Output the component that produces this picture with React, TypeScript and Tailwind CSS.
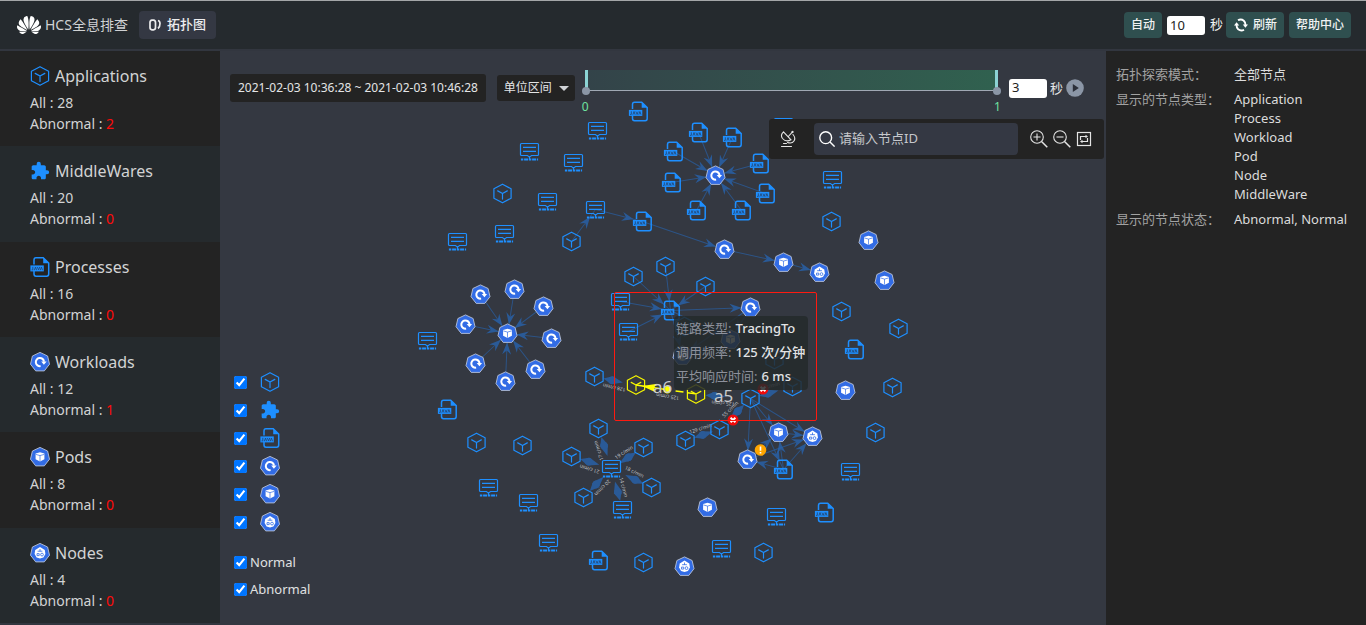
import React from 'react';
import { SiHuawei } from 'react-icons/si';
import { MdExtension } from 'react-icons/md';

type Point = [number, number];

const BLUE = '#1e8fff';

function CubeShape({ color = BLUE }: { color?: string }) {
  return (
    <g fill="none" stroke={color} strokeWidth="1.2" strokeLinejoin="round">
      <path d="M0 -9.3 L8.6 -4.7 V4.7 L0 9.3 L-8.6 4.7 V-4.7 Z" />
      <path d="M-4.8 -2.6 L0 0 L4.8 -2.6 M0 0 V5.6" strokeLinecap="round" />
    </g>
  );
}

function QueueShape() {
  return (
    <g fill="none" stroke={BLUE} strokeWidth="1.2">
      <path d="M-8 -8 H8 Q9 -8 9 -7 V3 Q9 4 8 4 H2 L0 5.6 L-2 4 H-8 Q-9 4 -9 3 V-7 Q-9 -8 -8 -8 Z" />
      <path d="M-6.5 -4.2 H6.5 M-6.5 -0.2 H6.5 M0 5 V8" />
      <path d="M-8.6 8 H8.6" strokeWidth="1.8" strokeDasharray="2.4 0.8 4 0.8" />
    </g>
  );
}

function JavaShape() {
  return (
    <g>
      <path
        d="M-6 -2.5 V-7 Q-6 -9.2 -4 -9.2 H3.2 L8.7 -4 V7 Q8.7 9.2 6.700 9.2 H-4 Q-6 9.2 -6 7 V4"
        fill="none"
        stroke={BLUE}
        strokeWidth="1.5"
      />
      <path d="M3.2 -9.6 L9.2 -3.8 H3.2 Z" fill={BLUE} />
      <rect x="-9.6" y="-1.6" width="13.4" height="6" fill={BLUE} />
      <path
        d="M-7.2 -0.2 V2.900 H-8.4 M-5.6 3.2 L-4.5 0 L-3.4 3.2 M-2.6 0 L-1.4 3 L-0.3 0 M0.3 3.2 L1.4 0 L2.5 3.2"
        fill="none"
        stroke="#244a78"
        strokeWidth="0.9"
      />
    </g>
  );
}

function Heptagon({ children }: { children: React.ReactNode }) {
  return (
    <g>
      <path
        d="M0 -9.6 L7.6 -6 L9.5 2.2 L4.3 8.9 H-4.3 L-9.5 2.2 L-7.6 -6 Z"
        fill="#326ce5"
        stroke="#b9c3d8"
        strokeWidth="0.9"
        strokeLinejoin="round"
      />
      {children}
    </g>
  );
}

function WorkloadShape() {
  return (
    <Heptagon>
      <path d="M0.6 4.1 A4.1 4.1 0 1 1 4 -0.3" fill="none" stroke="#fff" strokeWidth="2" />
      <path d="M1.2 -0.6 H6.6 L3.9 2.8 Z" fill="#fff" />
    </Heptagon>
  );
}

function PodShape() {
  return (
    <Heptagon>
      <path d="M0 -4.8 L4.4 -3.4 V2.2 L0 4.4 L-4.4 2.2 V-3.4 Z" fill="#fff" />
      <path d="M-4.2 -2.6 L0 -1.400 L4.2 -2.6 M0 -1.400 V4.2" fill="none" stroke="#326ce5" strokeWidth="0.7" />
    </Heptagon>
  );
}

function NodeShape() {
  return (
    <Heptagon>
      <path d="M0 -6 L2 -4.8 L4.8 -3 L5.4 1 L3.4 4.4 L0 5.6 L-3.4 4.4 L-5.4 1 L-4.8 -3 L-2 -4.8 Z" fill="#fff" />
      <g fill="none" stroke="#326ce5" strokeWidth="0.8">
        <path d="M0 -4 V-1.6 M-2.4 -1.8 H2.4 M-3 0.600 H-0.8 V2.600 H-3 Z" />
        <circle cx="2" cy="1.6" r="1.4" />
      </g>
    </Heptagon>
  );
}

function PuzzleShape() {
  return <MdExtension x={-10} y={-10} size={20} color={BLUE} />;
}

const shapes = {
  app: CubeShape,
  middleware: PuzzleShape,
  queue: QueueShape,
  process: JavaShape,
  workload: WorkloadShape,
  pod: PodShape,
  node: NodeShape,
};
type Kind = keyof typeof shapes;

function KindIcon({ kind }: { kind: Kind }) {
  const Shape = shapes[kind];
  return (
    <svg viewBox="-10 -10 20 20" className="size-5 shrink-0" aria-hidden="true">
      <Shape />
    </svg>
  );
}

const nodes: Partial<Record<Kind, Point[]>> = {
  queue: [
    [597, 130], [529, 151], [573, 162], [547, 201], [595, 209], [504, 233], [457, 241], [620, 301], [628, 331],
    [427, 340], [488, 487], [528, 502], [611, 468], [622, 509], [548, 542], [832, 179], [850, 471], [776, 516],
    [721, 548], [783, 126],
  ],
  app: [
    [502, 193], [571, 241], [633, 276], [665, 266], [705, 286], [594, 376], [750, 398], [792, 386], [774, 359],
    [684, 326], [719, 429], [685, 440], [598, 428], [571, 456], [643, 447], [651, 487], [583, 497], [476, 442],
    [522, 445], [643, 562], [763, 552], [831, 221], [841, 311], [898, 328], [892, 387], [875, 432],
  ],
  process: [
    [638, 111], [698, 132], [732, 137], [673, 151], [671, 182], [759, 163], [765, 193], [741, 210], [696, 210],
    [642, 221], [670, 310], [447, 409], [854, 349], [783, 469], [824, 512], [598, 560],
  ],
  workload: [
    [715, 175], [724, 249], [750, 307], [480, 294], [514, 289], [543, 306], [551, 338], [535, 369], [505, 381],
    [475, 363], [465, 324], [747, 459],
  ],
  pod: [
    [507, 333], [783, 262], [868, 240], [884, 280], [845, 390], [778, 432], [707, 507], [730, 339],
  ],
  node: [[819, 272], [812, 436], [684, 566], [682, 355]],
};

const links: [Point, Point][] = [
  ...([[698, 132], [732, 137], [673, 151], [671, 182], [759, 163], [765, 193], [741, 210], [696, 210]] as Point[]).map(
    (p): [Point, Point] => [p, [715, 175]],
  ),
  ...([[480, 294], [514, 289], [543, 306], [551, 338], [535, 369], [505, 381], [475, 363], [465, 324]] as Point[]).map(
    (p): [Point, Point] => [p, [507, 333]],
  ),
  ...([[633, 276], [665, 266], [705, 286], [620, 301], [628, 331]] as Point[]).map(
    (p): [Point, Point] => [p, [670, 310]],
  ),
  [[571, 241], [595, 209]],
  [[595, 209], [642, 221]],
  [[642, 221], [724, 249]],
  [[724, 249], [783, 262]],
  [[783, 262], [819, 272]],
  [[670, 310], [750, 307]],
  [[670, 310], [682, 355]],
  [[750, 307], [730, 339]],
  [[750, 307], [682, 355]],
  [[730, 339], [682, 355]],
  [[670, 310], [730, 339]],
  [[750, 398], [747, 459]],
  [[750, 398], [778, 432]],
  [[750, 398], [783, 469]],
  [[750, 398], [812, 436]],
  [[747, 459], [778, 432]],
  [[747, 459], [812, 436]],
  [[783, 469], [747, 459]],
  [[783, 469], [778, 432]],
  [[783, 469], [812, 436]],
  [[778, 432], [812, 436]],
];

const traffic: { from: Point; to: Point; label: string; upright?: boolean }[] = [
  { from: [611, 468], to: [598, 428], label: '17 c/min' },
  { from: [611, 468], to: [643, 447], label: '19 c/min' },
  { from: [611, 468], to: [571, 456], label: '21 c/min' },
  { from: [611, 468], to: [651, 487], label: '18 c/min' },
  { from: [611, 468], to: [622, 509], label: '14 c/min' },
  { from: [611, 468], to: [583, 497], label: '20 c/min' },
  { from: [636, 385], to: [594, 376], label: '128 c/min' },
  { from: [750, 398], to: [696, 394], label: '125 c/min' },
  { from: [719, 429], to: [750, 398], label: '55 c/min' },
  { from: [719, 429], to: [685, 440], label: '129 c/min', upright: true },
  { from: [792, 386], to: [750, 398], label: '55 c/min', upright: true },
];

function polar([x1, y1]: Point, [x2, y2]: Point) {
  return {
    angle: (Math.atan2(y2 - y1, x2 - x1) * 180) / Math.PI,
    length: Math.hypot(x2 - x1, y2 - y1),
  };
}

function Link({ from, to }: { from: Point; to: Point }) {
  const { angle, length } = polar(from, to);
  return (
    <g transform={`translate(${from[0]} ${from[1]}) rotate(${angle})`} opacity="0.8">
      <path d={`M0 0 H${length}`} stroke="#2b5b98" strokeWidth="1" />
      <path d="M0 0 L-12 -4.5 L-8 0 L-12 4.5 Z" transform={`translate(${length - 9} 0)`} fill="#2863ad" />
    </g>
  );
}

function TrafficLink({ from, to, label, upright }: { from: Point; to: Point; label: string; upright?: boolean }) {
  const { angle, length } = polar(from, to);
  return (
    <g transform={`translate(${from[0]} ${from[1]}) rotate(${angle})`}>
      <g transform={`translate(${length - 9} 0)`} fill="#2863ad" opacity="0.8">
        <path d="M0 0 L-9 -4 L-20 0 L-9 4 Z" />
        <circle cx="-9" cy="0" r="3.8" />
      </g>
      <text
        transform={`translate(${length / 2} ${upright ? 5 : -5}) rotate(${upright ? 180 : 0})`}
        textAnchor="middle"
        fill="#c4c6ca"
        fontSize="5"
      >
        {label}
      </text>
    </g>
  );
}

function ErrorBadge({ x, y }: { x: number; y: number }) {
  return (
    <g transform={`translate(${x} ${y})`}>
      <circle r="5.5" fill="#f00a0a" />
      <path d="M-2.4 -2.2 L2.4 2.2 M2.4 -2.2 L-2.4 2.2" stroke="#fff" strokeWidth="2" />
    </g>
  );
}

function Topology() {
  return (
    <svg viewBox="220 51 886 574" className="absolute inset-0 h-full w-full" role="img" aria-label="拓扑图">
      <g transform="translate(0.5 0.5)">
        {links.map(([from, to], i) => (
          <Link key={i} from={from} to={to} />
        ))}
        {traffic.map((edge, i) => (
          <TrafficLink key={i} {...edge} />
        ))}
        {(Object.keys(nodes) as Kind[]).map((kind) => {
          const Shape = shapes[kind];
          return nodes[kind]!.map(([x, y]) => (
            <g key={`${kind}-${x}-${y}`} transform={`translate(${x} ${y})`}>
              <Shape />
            </g>
          ));
        })}
      </g>
      <g transform="translate(636 385)">
        <CubeShape color="#f6f600" />
      </g>
      <g transform="translate(696 394)">
        <CubeShape color="#f6f600" />
      </g>
      <g transform="translate(636 385) rotate(8.5)">
        <path d="M0 0 H30" stroke="#ffff00" strokeWidth="1.5" />
        <path d="M6 0 L21 -4.5 L18 0 L21 4.5 Z" fill="#ffff00" />
        <circle cx="31.5" cy="0" r="3.8" fill="#ffff00" />
        <path d="M40 0 H60" stroke="#ffff00" strokeWidth="1.5" strokeDasharray="8 4" />
        <text x="-33" y="-5" transform="rotate(180)" textAnchor="middle" fontSize="5" fill="#c4c6ca">
          125 c/min
        </text>
      </g>
      <text x="653" y="393" fontSize="17" fill="#c8cacd">a6</text>
      <text x="714" y="402" fontSize="17" fill="#c8cacd">a5</text>
      <ErrorBadge x={733} y={420} />
      <ErrorBadge x={763} y={389} />
      <g transform="translate(760.5 450)">
        <circle r="5.8" fill="#ffa500" />
        <path d="M0 -3.6 V0.8 M0 2 V3.6" stroke="#fff" strokeWidth="1.6" />
      </g>
      <rect x="614.5" y="292.5" width="202" height="128" rx="1.5" fill="none" stroke="#ff1a10" />
    </svg>
  );
}

const summaries: { kind: Kind; title: string; all: number; abnormal: number }[] = [
  { kind: 'app', title: 'Applications', all: 28, abnormal: 2 },
  { kind: 'middleware', title: 'MiddleWares', all: 20, abnormal: 0 },
  { kind: 'process', title: 'Processes', all: 16, abnormal: 0 },
  { kind: 'workload', title: 'Workloads', all: 12, abnormal: 1 },
  { kind: 'pod', title: 'Pods', all: 8, abnormal: 0 },
  { kind: 'node', title: 'Nodes', all: 4, abnormal: 0 },
];

function Header() {
  return (
    <header className="flex h-[51px] shrink-0 items-center justify-between border-t border-b-2 border-t-[#a4a6a8] border-b-[#32363f] bg-[#252a2e] pr-[15px] pl-[17px]">
      <div className="flex items-center">
        <SiHuawei className="size-6 text-white" aria-hidden="true" />
        <h1 className="ml-1 text-sm text-[#d0d2d4]">HCS全息排查</h1>
        <button
          type="button"
          className="ml-[11px] flex h-7 items-center gap-1.5 rounded bg-[#343843] px-2.5 text-[13px] font-medium text-[#ececee]"
        >
          <svg viewBox="0 0 12 12" className="size-3" fill="none" stroke="currentColor" strokeWidth="1.7" aria-hidden="true">
            <path d="M3 1.2 H4.5 Q6.5 1.5 6.5 3.5 V8.5 Q6.5 10.5 4.5 10.8 H3 Q1 10.5 1 8.5 V3.5 Q1 1.5 3 1.2 Z" />
            <path d="M9 1.5 Q11 2 11 4.5 Q11 8 9 9.5" />
          </svg>
          拓扑图
        </button>
      </div>
      <div className="flex items-center gap-[5px] text-xs font-medium text-[#f0f2f2]">
        <button type="button" className="h-[26px] rounded bg-[#2f4f4f] px-[7px]">自动</button>
        <input
          aria-label="自动刷新间隔"
          defaultValue="10"
          className="h-[19px] w-[38px] rounded-[3px] bg-white px-[3px] text-[13px] font-normal text-[#222]"
        />
        <span className="-mr-0.5 text-[13px] font-normal">秒</span>
        <button type="button" className="flex h-[26px] items-center gap-[5px] rounded bg-[#2f4f4f] pr-[7px] pl-2">
          <svg viewBox="0 0 14 14" className="size-3.5" aria-hidden="true">
            <path d="M4 2.3 Q7 0.5 9.8 2.7 Q11.5 4.3 11.5 7 M10 11.7 Q7 13.5 4.2 11.3 Q2.5 9.7 2.5 7" fill="none" stroke="#fff" strokeWidth="1.9" />
            <path d="M8.8 6.5 H14 L11.4 9.8 Z M0 7.5 H5.2 L2.6 4.2 Z" fill="#fff" />
          </svg>
          刷新
        </button>
        <button type="button" className="h-[26px] rounded bg-[#2f4f4f] px-[7px]">帮助中心</button>
      </div>
    </header>
  );
}

function Sidebar() {
  return (
    <aside className="flex w-[220px] shrink-0 flex-col border-b-2 border-[#32363f] text-[#d2d3d4]">
      {summaries.map(({ kind, title, all, abnormal }) => (
        <section key={kind} className="flex-1 bg-[#252a2d] px-[30px] pt-[13px] pb-2 odd:bg-[#232323]">
          <h2 className="flex items-center gap-[5px] text-base leading-6">
            <KindIcon kind={kind} />
            {title}
          </h2>
          <p className="mt-1 text-sm leading-[21px]">All : {all}</p>
          <p className="text-sm leading-[21px]">
            Abnormal : <span className="text-[#ff0a0a]">{abnormal}</span>
          </p>
        </section>
      ))}
    </aside>
  );
}

function Timeline() {
  return (
    <div className="relative min-w-0 flex-1">
      <div className="h-[21px] border-b border-[#a0a8b4] bg-linear-to-r from-[#334349] to-[#30614f]" />
      <div className="absolute inset-x-0 top-0 flex h-5 justify-between">
        <span className="-ml-px w-[3px] bg-[#8cd3d4]" />
        <span className="-mr-px w-[3px] bg-[#8cd3d4]" />
      </div>
      <div className="absolute inset-x-0 top-[17px] flex justify-between">
        <span className="-ml-1 size-2 rounded-full bg-[#8b96a6]" />
        <span className="-mr-1 size-2 rounded-full bg-[#8b96a6]" />
      </div>
      <input type="range" min="0" max="1" defaultValue="0" aria-label="开始" className="absolute inset-x-0 top-0 h-5 w-full opacity-0" />
      <div className="absolute inset-x-0 top-[29px] flex justify-between text-xs leading-4 text-[#6fe3a0]">
        <span className="-ml-1">0</span>
        <span className="-mr-1">1</span>
      </div>
    </div>
  );
}

function Toolbar() {
  return (
    <div className="relative flex items-start pt-[19px] pr-[22px] pl-2.5 text-[13px] text-[#e4e5e6]">
      <button type="button" className="mt-1 h-7 shrink-0 rounded-[3px] bg-[#232323] px-2 text-xs whitespace-nowrap">
        2021-02-03 10:36:28 ~ 2021-02-03 10:46:28
      </button>
      <div className="relative mt-[5px] ml-[11px] shrink-0">
        <select aria-label="区间" className="h-[26px] w-[78px] appearance-none rounded-[3px] bg-[#232323] pl-[7px] text-xs">
          <option>单位区间</option>
        </select>
        <svg viewBox="0 0 10 5" className="pointer-events-none absolute top-[11px] right-1.5 h-[5px] w-2.5" aria-hidden="true">
          <path d="M0 0 H10 L5 5 Z" fill="#d0d2d6" />
        </svg>
      </div>
      <div className="ml-[11px] flex min-w-0 flex-1 pr-3">
        <Timeline />
      </div>
      <div className="mt-2 flex items-center gap-[3px]">
        <input
          aria-label="播放间隔"
          defaultValue="3"
          className="h-[19px] w-[38px] rounded-[3px] bg-white px-[3px] text-[13px] text-[#222]"
        />
        <span className="leading-5">秒</span>
        <button type="button" aria-label="播放">
          <svg viewBox="0 0 18 18" className="block size-[18px]" aria-hidden="true">
            <circle cx="9" cy="9" r="8.8" fill="#8b96a6" />
            <path d="M6.8 5 L12.8 9 L6.8 13 Z" fill="#2c303a" />
          </svg>
        </button>
      </div>
    </div>
  );
}

function SearchPanel() {
  return (
    <div className="relative mt-[17px] mr-0.5 flex h-10 w-[335px] items-center self-end rounded-[3px] bg-[#232323] pr-3 pl-2.5 text-[#e4e4e4]">
      <button type="button" aria-label="探索">
        <svg viewBox="0 0 18 18" className="block size-[18px]" fill="none" stroke="currentColor" strokeWidth="1.1" strokeLinecap="round" aria-hidden="true">
          <path d="M4.5 1.8 Q1 5 3.500 8.500 Q7 12.500 12 9.800 L4.500 1.800 M9.300 6.500 L13.300 2.200" />
          <path d="M14 4.500 Q17 8 15 11 Q13 14 8.500 12.500 M4.500 13.500 H7.500 M2.500 16.500 H12.500" />
          <circle cx="13.500" cy="2" r="0.600" fill="currentColor" />
        </svg>
      </button>
      <label className="ml-[17px] flex h-8 min-w-0 flex-1 items-center gap-1 rounded bg-[#343843] px-[5px]">
        <svg viewBox="0 0 16 16" className="size-4 shrink-0" fill="none" stroke="#fff" strokeWidth="1.4" aria-hidden="true">
          <circle cx="6.7" cy="6.7" r="5.9" />
          <path d="M11 11 L15.6 15.6" />
        </svg>
        <input
          aria-label="节点ID"
          placeholder="请输入节点ID"
          className="min-w-0 flex-1 bg-transparent text-[13px] outline-none placeholder:text-[#c6c8cc]"
        />
      </label>
      <div className="ml-3 flex items-center gap-[5px]">
        {['放大', '缩小'].map((name, i) => (
          <button key={name} type="button" aria-label={name}>
            <svg viewBox="0 0 18 18" className="block size-[18px]" fill="none" stroke="currentColor" strokeWidth="1.1" aria-hidden="true">
              <circle cx="7" cy="7" r="6.3" />
              <path d={i === 0 ? 'M7 3.5 V10.5 M3.5 7 H10.5' : 'M3.5 7 H10.5'} />
              <path d="M11.5 11.5 L17.3 17.3" strokeWidth="1.5" />
            </svg>
          </button>
        ))}
        <button type="button" aria-label="适应画布">
          <svg viewBox="0 0 16 16" className="block size-4" fill="none" stroke="currentColor" strokeWidth="1.2" aria-hidden="true">
            <rect x="1.5" y="1.5" width="13" height="13" />
            <path d="M4.5 9 V5.5 H10.5 M11.5 7 V10.5 H5.5" />
            <path d="M9.5 3.8 L12 5.5 L9.5 7.2 Z M6.5 8.8 L4 10.5 L6.5 12.2 Z" fill="currentColor" stroke="none" />
          </svg>
        </button>
      </div>
    </div>
  );
}

const filterKinds: { kind: Kind; name: string }[] = [
  { kind: 'app', name: 'Application' },
  { kind: 'middleware', name: 'MiddleWare' },
  { kind: 'process', name: 'Process' },
  { kind: 'workload', name: 'Workload' },
  { kind: 'pod', name: 'Pod' },
  { kind: 'node', name: 'Node' },
];

function Filters() {
  return (
    <div className="relative mt-auto flex flex-col items-start pb-[22px] pl-3.5 text-[13px] text-[#e0e1e2]">
      {filterKinds.map(({ kind, name }) => (
        <label key={kind} className="flex h-7 items-center gap-[13px]">
          <input type="checkbox" defaultChecked aria-label={name} className="size-[13px]" />
          <KindIcon kind={kind} />
        </label>
      ))}
      <div className="mt-[13px]">
        {['Normal', 'Abnormal'].map((name) => (
          <label key={name} className="flex h-[27px] items-center gap-[3px]">
            <input type="checkbox" defaultChecked className="size-[13px]" />
            {name}
          </label>
        ))}
      </div>
    </div>
  );
}

const linkFacts = [
  ['链路类型', 'TracingTo'],
  ['调用频率', '125 次/分钟'],
  ['平均响应时间', '6 ms'],
];

function LinkTooltip() {
  return (
    <dl
      role="tooltip"
      className="absolute top-[265px] left-[454px] w-[134px] rounded-sm bg-[#252a2c]/85 px-0.5 pb-0.5 text-[13px] leading-6 whitespace-nowrap"
    >
      {linkFacts.map(([name, value]) => (
        <div key={name} className="flex gap-1">
          <dt className="text-[#8d919c]">{name}:</dt>
          <dd className="font-medium text-[#e2e3e5]">{value}</dd>
        </div>
      ))}
    </dl>
  );
}

const details: [string, string[]][] = [
  ['拓扑探索模式：', ['全部节点']],
  ['显示的节点类型：', ['Application', 'Process', 'Workload', 'Pod', 'Node', 'MiddleWare']],
  ['显示的节点状态：', ['Abnormal, Normal']],
];

function DetailPanel() {
  return (
    <aside className="w-[260px] shrink-0 bg-[#232323] px-2.5 pt-3.5 text-[13px] leading-[19px]">
      <dl className="grid grid-cols-[118px_1fr] gap-y-1.5">
        {details.map(([name, values]) => (
          <React.Fragment key={name}>
            <dt className="text-[#a2a2a2]">{name}</dt>
            <dd className="whitespace-nowrap text-[#dcdcdc]">
              {values.map((value) => (
                <div key={value}>{value}</div>
              ))}
            </dd>
          </React.Fragment>
        ))}
      </dl>
    </aside>
  );
}

export default function App() {
  return (
    <div className="flex min-h-screen flex-col bg-[#343841] font-['Noto_Sans','Noto_Sans_CJK_SC',sans-serif]">
      <Header />
      <div className="flex flex-1">
        <Sidebar />
        <main className="relative flex min-w-0 flex-1 flex-col overflow-hidden">
          <Topology />
          <Toolbar />
          <SearchPanel />
          <Filters />
          <LinkTooltip />
        </main>
        <DetailPanel />
      </div>
    </div>
  );
}
